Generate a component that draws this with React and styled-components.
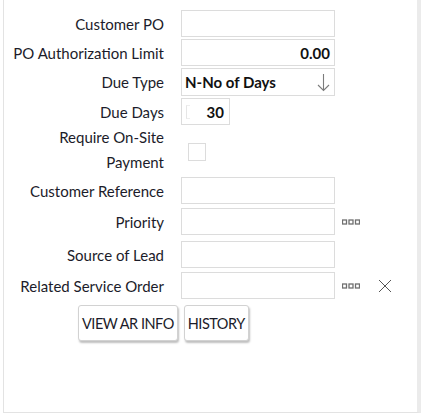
import React from "react";
import styled, { createGlobalStyle } from "styled-components";

const GlobalStyle = createGlobalStyle`
  body {
    margin: 0;
    background: #fff;
    font-family: "Lato", "Liberation Sans", sans-serif;
  }
`;

const Panel = styled.div`
  box-sizing: border-box;
  margin-left: 3px;
  width: 418px;
  height: 413px;
  border-left: 1px solid #e3e3e3;
  border-right: 4px solid #ebebeb;
  border-bottom: 1px solid #e3e3e3;
  padding-top: 10px;
  display: flex;
  flex-direction: column;
`;

const Row = styled.div`
  display: flex;
  align-items: center;
  margin-bottom: ${(p) => p.$gap ?? 2}px;
`;

const Label = styled.div`
  width: 160px;
  margin-right: 17px;
  text-align: right;
  font-size: 15px;
  line-height: ${(p) => (p.$tall ? "25px" : "18px")};
  color: #1c1c2a;
  flex-shrink: 0;
`;

const Input = styled.div`
  box-sizing: border-box;
  width: ${(p) => p.$w ?? 154}px;
  height: ${(p) => p.$h ?? 27}px;
  border: 1px solid #dcdcdc;
  background: #fff;
  display: flex;
  align-items: center;
  justify-content: ${(p) => (p.$left ? "space-between" : "flex-end")};
  padding: 0 4px 0 3px;
  font-size: 15px;
  font-weight: ${(p) => (p.$bold ? 700 : 400)};
  color: #111;
  position: relative;
`;

const SpinMark = styled.span`
  position: absolute;
  left: 4px;
  top: 6px;
  width: 4px;
  height: 14px;
  border-left: 1px solid #e6e6e6;
  border-top: 1px solid #eee;
  border-bottom: 1px solid #eee;
  box-sizing: border-box;
`;

const Checkbox = styled.div`
  box-sizing: border-box;
  width: 18px;
  height: 18px;
  margin-left: 7px;
  margin-top: ${(p) => p.$mt ?? 0}px;
  border: 1px solid #dcdcdc;
`;

const IconSlot = styled.div`
  display: flex;
  align-items: center;
  margin-left: ${(p) => p.$ml ?? 7}px;
`;

const ButtonBar = styled.div`
  display: flex;
  gap: 6px;
  padding-left: 74px;
  margin-top: 4px;
`;

const Button = styled.button`
  box-sizing: border-box;
  height: 36px;
  padding: 0 3px;
  border: 1px solid #d2d2d2;
  border-radius: 3px;
  background: #fff;
  box-shadow: 1px 2px 2px rgba(0, 0, 0, 0.25);
  font-family: "Lato", "Liberation Sans", sans-serif;
  font-size: 14.5px;
  color: #1c1c2a;
  letter-spacing: -0.5px;
`;

function Dots() {
  return (
    <svg width="18" height="6" viewBox="0 0 18 6">
      {[0, 6.5, 13].map((x) => (
        <rect key={x} x={x + 0.5} y="1" width="4" height="4" fill="none" stroke="#6f6f6f" strokeWidth="1.3" />
      ))}
    </svg>
  );
}

function Cross() {
  return (
    <svg width="14" height="14" viewBox="0 0 14 14">
      <path d="M1 1 L13 13 M13 1 L1 13" stroke="#555" strokeWidth="1" fill="none" />
    </svg>
  );
}

function DownArrow() {
  return (
    <svg width="13" height="19" viewBox="0 0 13 19">
      <path d="M6.5 1 V17.5 M1 12 L6.5 17.5 L12 12" stroke="#7c7c7c" strokeWidth="1.1" fill="none" />
    </svg>
  );
}

export default function App() {
  return (
    <>
      <GlobalStyle />
      <Panel>
        <Row>
          <Label>Customer PO</Label>
          <Input />
        </Row>
        <Row>
          <Label>PO Authorization Limit</Label>
          <Input $bold>0.00</Input>
        </Row>
        <Row>
          <Label>Due Type</Label>
          <Input $left $bold $h={28}>
            N-No of Days
            <DownArrow />
          </Input>
        </Row>
        <Row $gap={0}>
          <Label>Due Days</Label>
          <Input $bold $w={49} style={{ paddingRight: 5 }}>
            <SpinMark />
            30
          </Input>
        </Row>
        <Row $gap={2}>
          <Label $tall>
            Require On-Site
            <br />
            Payment
          </Label>
          <Checkbox $mt={3} />
        </Row>
        <Row $gap={4}>
          <Label>Customer Reference</Label>
          <Input />
        </Row>
        <Row $gap={6}>
          <Label>Priority</Label>
          <Input />
          <IconSlot>
            <Dots />
          </IconSlot>
        </Row>
        <Row $gap={4}>
          <Label>Source of Lead</Label>
          <Input />
        </Row>
        <Row>
          <Label>Related Service Order</Label>
          <Input />
          <IconSlot>
            <Dots />
          </IconSlot>
          <IconSlot $ml={18}>
            <Cross />
          </IconSlot>
        </Row>
        <ButtonBar>
          <Button>VIEW AR INFO</Button>
          <Button>HISTORY</Button>
        </ButtonBar>
      </Panel>
    </>
  );
}
